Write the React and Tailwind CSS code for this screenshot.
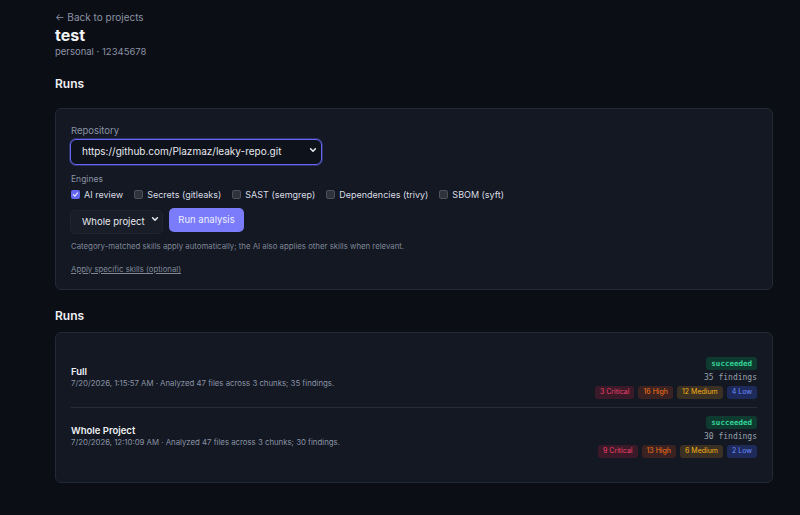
import { useState } from 'react'

const engines = [
  { id: 'ai', label: 'AI review', checked: true },
  { id: 'gitleaks', label: 'Secrets (gitleaks)', checked: false },
  { id: 'semgrep', label: 'SAST (semgrep)', checked: false },
  { id: 'trivy', label: 'Dependencies (trivy)', checked: false },
  { id: 'syft', label: 'SBOM (syft)', checked: false },
]

const runs = [
  {
    name: 'Full',
    meta: '7/20/2026, 1:15:57 AM · Analyzed 47 files across 3 chunks; 35 findings.',
    findings: 35,
    sev: { critical: 3, high: 16, medium: 12, low: 4 },
  },
  {
    name: 'Whole Project',
    meta: '7/20/2026, 12:10:09 AM · Analyzed 47 files across 3 chunks; 30 findings.',
    findings: 30,
    sev: { critical: 9, high: 13, medium: 6, low: 2 },
  },
]

function Chevron() {
  return (
    <svg width="8" height="8" viewBox="0 0 10 10" fill="none" stroke="#e5e7eb" strokeWidth="2" strokeLinecap="round" strokeLinejoin="round">
      <path d="M2 3.5 L5 6.5 L8 3.5" />
    </svg>
  )
}

function Checkbox({ checked }) {
  if (checked) {
    return (
      <span className="flex h-[9px] w-[9px] items-center justify-center rounded-[2px] bg-[#6366f1]">
        <svg width="7" height="7" viewBox="0 0 10 10" fill="none" stroke="#e0e2ff" strokeWidth="1.8" strokeLinecap="round" strokeLinejoin="round">
          <path d="M2 5.2 L4.2 7.4 L8 2.8" />
        </svg>
      </span>
    )
  }
  return <span className="h-[9px] w-[9px] rounded-[2px] border border-[#4b505b] bg-[#2f333c]" />
}

function App() {
  const [engineState, setEngineState] = useState(engines)

  function toggle(id) {
    setEngineState(engineState.map((e) => (e.id === id ? { ...e, checked: !e.checked } : e)))
  }

  return (
    <div className="min-h-screen bg-[#0b0e14] pl-[55px] pr-[27px] pt-[10px] pb-10 font-['Inter','Liberation_Sans',sans-serif] text-[#e6e8ee]">
      <a className="block text-[10px] leading-[14px] text-[#8b93a5]">← Back to projects</a>
      <h1 className="mt-[1px] text-[16px] font-bold leading-[20px] text-[#f3f4f6]">test</h1>
      <p className="text-[9.5px] leading-[14px] text-[#8b93a5]">personal · 12345678</p>

      <h2 className="mt-[17px] text-[12px] font-semibold leading-[16px] text-[#eef0f4]">Runs</h2>

      {/* New run card */}
      <div className="mt-[16px] rounded-[6px] border border-[#232936] bg-[#131822] px-[15px] pt-[15px] pb-[14px]">
        <div className="text-[9.5px] leading-[13px] text-[#8b93a5]">Repository</div>
        <div className="relative -ml-[1px] w-[252px]">
          <select className="h-[26px] w-full appearance-none rounded-[6px] border border-[#6366f1] bg-[#0e121a] pl-[11px] text-[10px] text-[#e6e8ee] shadow-[0_0_0_1px_rgba(99,102,241,0.35)] outline-none">
            <option>https://github.com/Plazmaz/leaky-repo.git</option>
          </select>
          <span className="pointer-events-none absolute right-[5px] top-[9px]"><Chevron /></span>
        </div>

        <div className="mt-[8px] text-[8.5px] leading-[12px] text-[#8b93a5]">Engines</div>
        <div className="mt-[4px] flex items-center gap-[11px]">
          {engineState.map((e) => (
            <label key={e.id} onClick={() => toggle(e.id)} className="flex cursor-pointer items-center gap-[4px] text-[9px] leading-[12px] text-[#d9dce3]">
              <Checkbox checked={e.checked} />
              {e.label}
            </label>
          ))}
        </div>

        <div className="mt-[6px] flex items-center gap-[6px]">
          <div className="relative -ml-[1px] w-[93px]">
            <select className="h-[24px] w-full appearance-none rounded-[5px] border border-[#1f2530] bg-[#181d28] pl-[11px] text-[9.5px] text-[#e6e8ee] outline-none">
              <option>Whole project</option>
            </select>
            <span className="pointer-events-none absolute right-[4px] top-[8px]"><Chevron /></span>
          </div>
          <button className="h-[24px] w-[75px] rounded-[5px] bg-[#7b7cfb] text-[9.5px] text-[#eceeff]">Run analysis</button>
        </div>

        <p className="mt-[6px] text-[7.8px] leading-[12px] text-[#7f8797]">
          Category-matched skills apply automatically; the AI also applies other skills when relevant.
        </p>
        <a className="mt-[11px] block text-[7.8px] leading-[12px] text-[#7f8797] underline">Apply specific skills (optional)</a>
      </div>

      <h2 className="mt-[18px] text-[12px] font-semibold leading-[16px] text-[#eef0f4]">Runs</h2>

      {/* Runs list */}
      <div className="mt-[8px] rounded-[6px] border border-[#232936] bg-[#131822] px-[15px] py-[16px]">
        {runs.map((run, i) => (
          <div key={run.name} className={i > 0 ? 'border-t border-[#262c38]' : ''}>
            <div className="flex items-center justify-between py-[8px]">
              <div>
                <div className="text-[9.5px] font-semibold leading-[12px] text-[#eef0f4]">{run.name}</div>
                <div className="text-[7.8px] leading-[11px] text-[#8b93a5]">{run.meta}</div>
              </div>
              <div className="flex flex-col items-end">
                <span className="flex h-[13px] items-center rounded-[3px] bg-[#0f3a30] px-[5px] font-['DejaVu_Sans_Mono','Liberation_Mono',monospace] text-[7.5px] font-semibold text-[#34d399]">succeeded</span>
                <span className="mt-[2px] font-['DejaVu_Sans_Mono','Liberation_Mono',monospace] text-[8px] leading-[12px] text-[#9aa1ae]">{run.findings} findings</span>
                <div className="mt-[2px] flex gap-[4px]">
                  <span className="flex h-[13px] items-center rounded-[3px] bg-[#3a1a28] px-[5px] text-[7px] text-[#f0406a]">{run.sev.critical} Critical</span>
                  <span className="flex h-[13px] items-center rounded-[3px] bg-[#3a2222] px-[5px] text-[7px] text-[#f97316]">{run.sev.high} High</span>
                  <span className="flex h-[13px] items-center rounded-[3px] bg-[#3a3024] px-[5px] text-[7px] text-[#f5b014]">{run.sev.medium} Medium</span>
                  <span className="flex h-[13px] items-center rounded-[3px] bg-[#1e2a5a] px-[5px] text-[7px] text-[#6d8cff]">{run.sev.low} Low</span>
                </div>
              </div>
            </div>
          </div>
        ))}
      </div>
    </div>
  )
}

export default App
